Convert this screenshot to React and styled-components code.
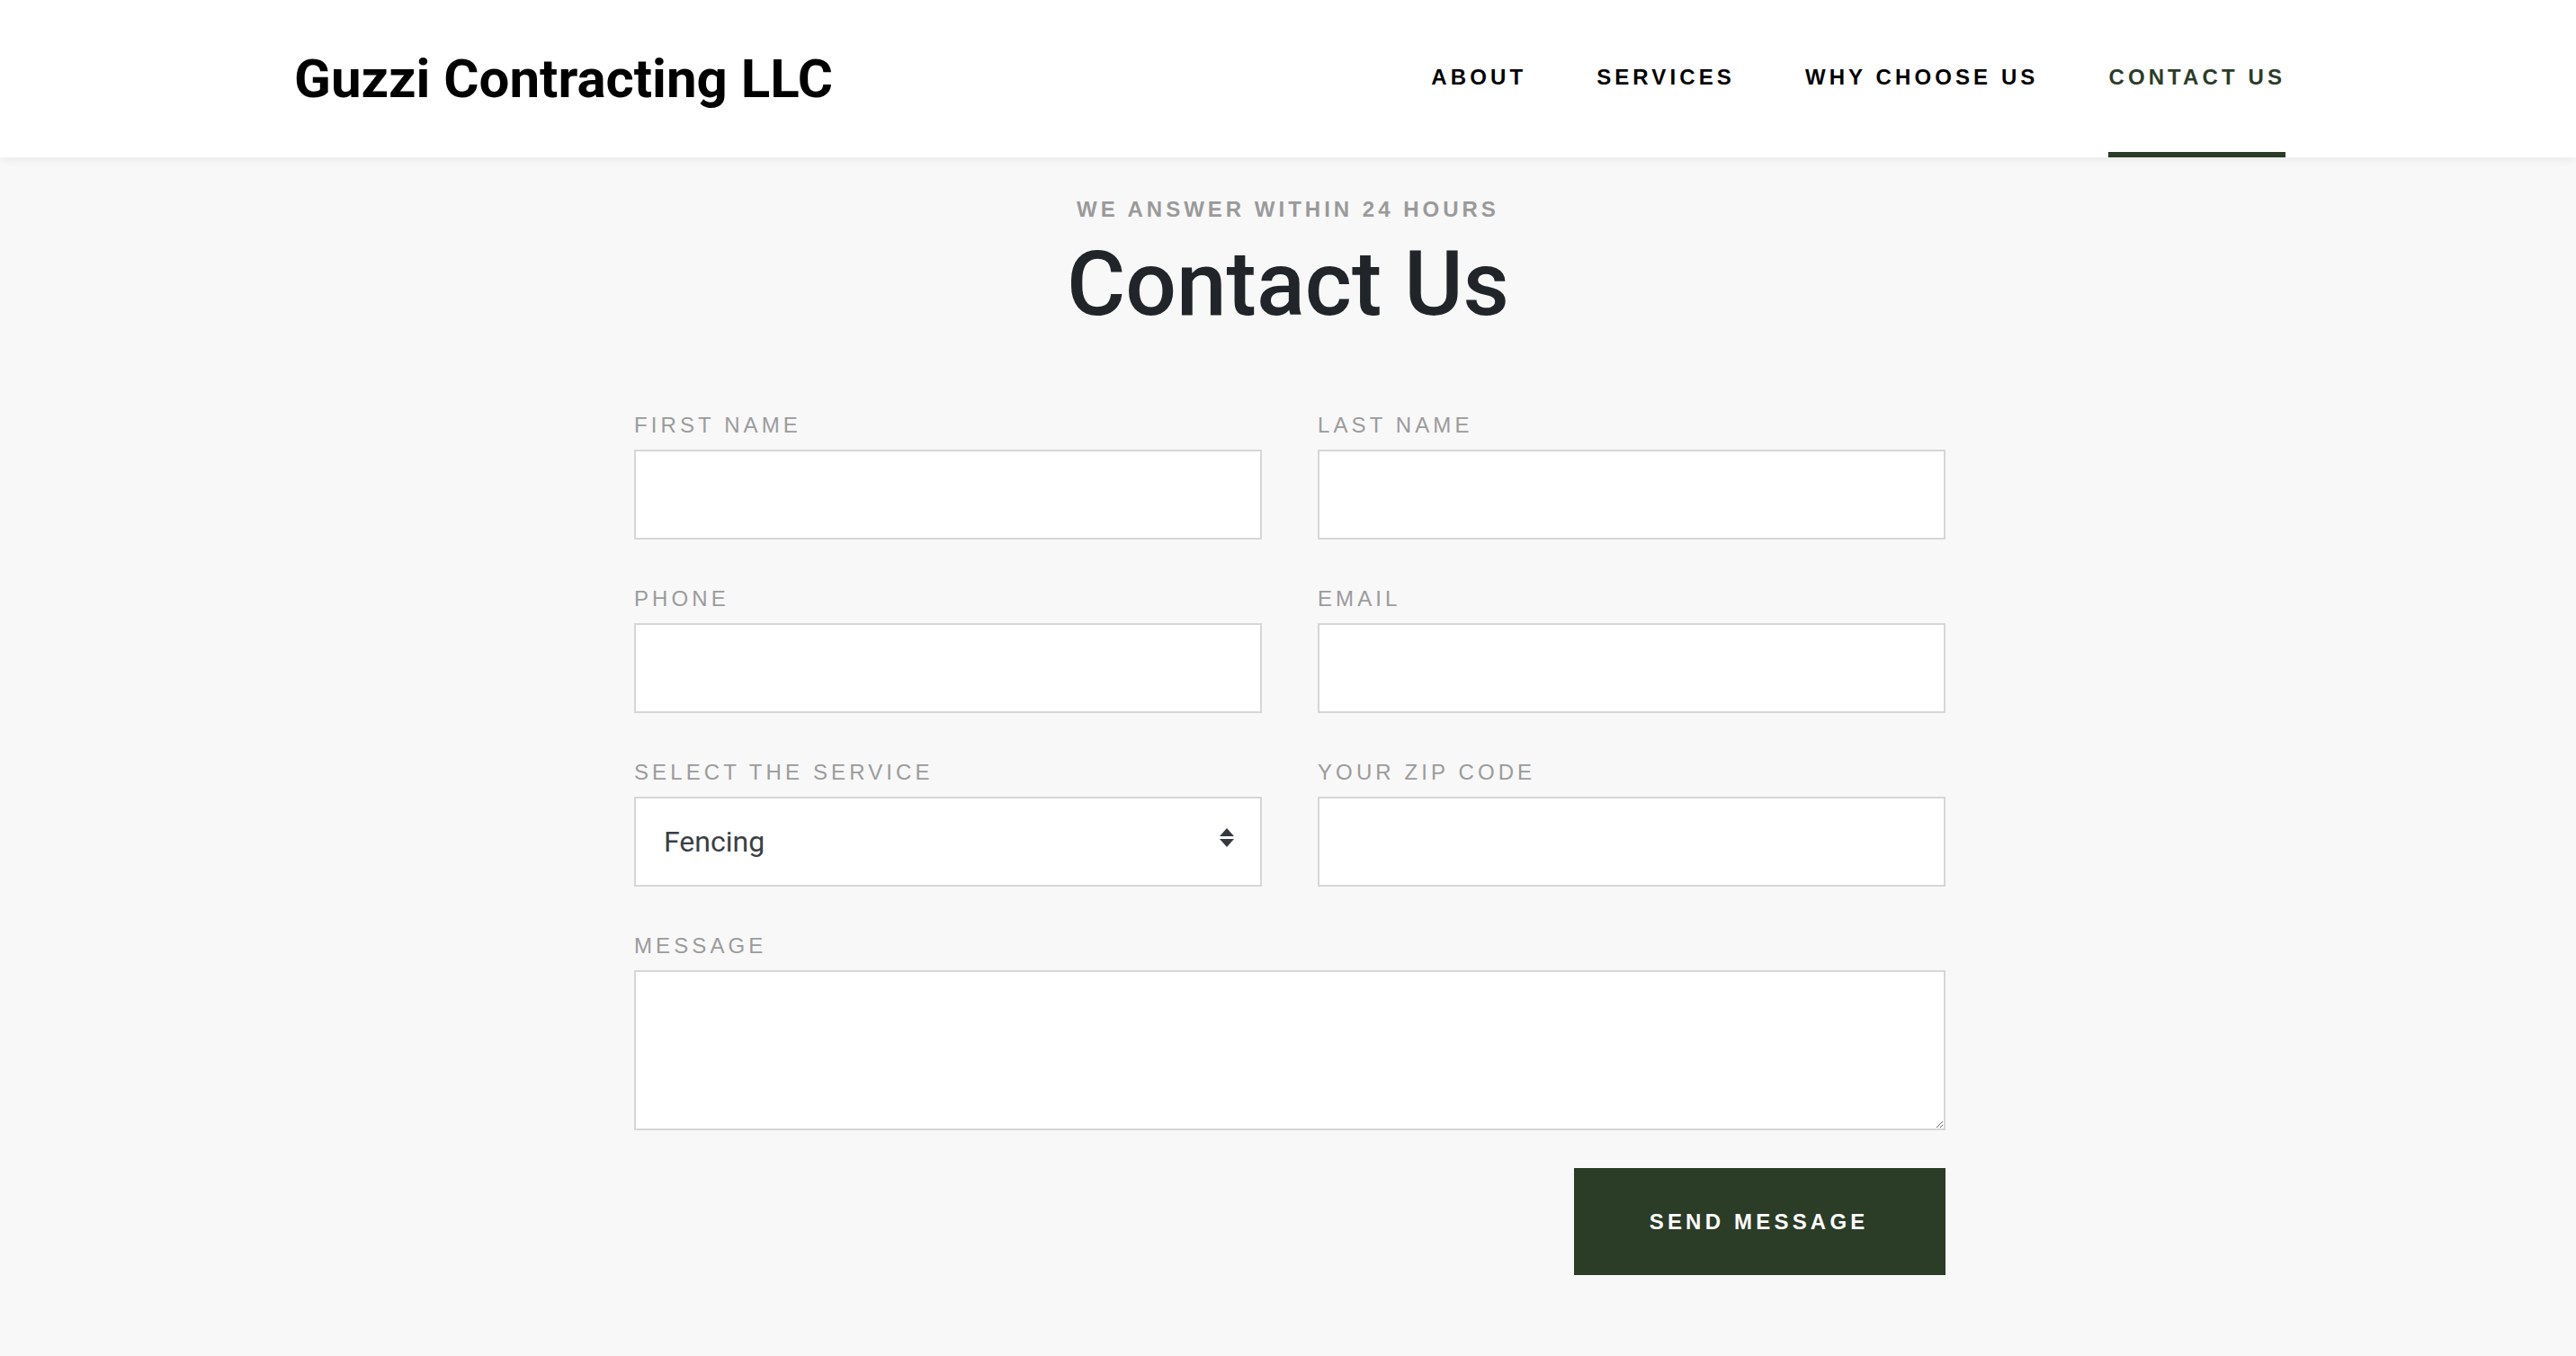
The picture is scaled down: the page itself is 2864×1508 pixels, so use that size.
import React from "react";
import styled, { createGlobalStyle } from "styled-components";

const GlobalStyle = createGlobalStyle`
  body {
    margin: 0;
    background: #f8f8f8;
    font-family: "Liberation Sans", Arial, Helvetica, sans-serif;
  }
  * {
    box-sizing: border-box;
  }
`;

const green = "#2b3c27";

const Page = styled.div`
  min-height: 100vh;
  background: #f8f8f8;
`;

const Header = styled.header`
  background: #fff;
  box-shadow: 0 2px 10px rgba(0, 0, 0, 0.07);
  position: relative;
  z-index: 1;
`;

const HeaderInner = styled.div`
  width: 2218px;
  height: 175px;
  margin: 0 auto;
  padding-left: 4px;
  display: flex;
  justify-content: space-between;
  align-items: stretch;
`;

const Logo = styled.div`
  display: flex;
  align-items: center;
  font-family: Roboto, "Liberation Sans", sans-serif;
  font-weight: 700;
  font-size: 60px;
  color: #000;
`;

const Nav = styled.nav`
  display: flex;
  gap: 78px;
`;

const NavItem = styled.a`
  display: flex;
  align-items: center;
  border-top: 3px solid transparent;
  border-bottom: 6px solid ${(p) => (p.$active ? green : "transparent")};
  font-family: "Liberation Sans", Arial, sans-serif;
  font-weight: 700;
  font-size: 24px;
  letter-spacing: 4.1px;
  color: ${(p) => (p.$active ? green : "#000")};
  text-decoration: none;
  cursor: pointer;
`;

const Main = styled.main`
  padding: 43px 0 90px;
`;

const Eyebrow = styled.div`
  text-align: center;
  font-family: "Liberation Sans", Arial, sans-serif;
  font-weight: 700;
  font-size: 24px;
  line-height: 29px;
  letter-spacing: 4px;
  color: #9a9a9a;
`;

const Title = styled.h1`
  margin: 9px 0 0;
  text-align: center;
  font-family: Roboto, "Liberation Sans", sans-serif;
  font-weight: 500;
  font-size: 100px;
  line-height: 120px;
  color: #212529;
`;

const Form = styled.form`
  width: 1458px;
  margin: 82px 0 0 calc(50% - 727px);
  display: grid;
  grid-template-columns: 1fr 1fr;
  column-gap: 62px;
  row-gap: 51px;
`;

const Field = styled.div`
  display: flex;
  flex-direction: column;
  grid-column: ${(p) => (p.$wide ? "1 / span 2" : "auto")};
`;

const Label = styled.label`
  display: block;
  margin-bottom: 13px;
  font-family: "Liberation Sans", Arial, sans-serif;
  font-size: 24px;
  line-height: 29px;
  letter-spacing: 4.1px;
  color: #9b9b9b;
`;

const inputBase = `
  width: 100%;
  background: #fff;
  border: 2px solid #d6d6d6;
  border-radius: 0;
  outline: none;
  font-family: Roboto, "Liberation Sans", sans-serif;
  font-size: 32px;
  color: #3a3f44;
`;

const Input = styled.input`
  ${inputBase}
  height: 100px;
  padding: 0 31px;
`;

const SelectWrap = styled.div`
  position: relative;
`;

const Select = styled.select`
  ${inputBase}
  height: 100px;
  padding: 0 31px;
  appearance: none;
  -webkit-appearance: none;
`;

const Arrows = styled.svg`
  position: absolute;
  right: 31px;
  top: 35px;
  pointer-events: none;
`;

const TextArea = styled.textarea`
  ${inputBase}
  height: 178px;
  padding: 20px 31px;
  resize: vertical;
  display: block;
`;

const Actions = styled.div`
  grid-column: 1 / span 2;
  display: flex;
  justify-content: flex-end;
  margin-top: -9px;
`;

const SendButton = styled.button`
  width: 413px;
  height: 119px;
  border: none;
  background: ${green};
  color: #fff;
  font-family: "Liberation Sans", Arial, sans-serif;
  font-weight: 700;
  font-size: 24px;
  letter-spacing: 4.2px;
  padding-left: 4.2px;
  cursor: pointer;
`;

const navLinks = ["ABOUT", "SERVICES", "WHY CHOOSE US", "CONTACT US"];

const App = () => {
  return (
    <Page>
      <GlobalStyle />
      <Header>
        <HeaderInner>
          <Logo>Guzzi Contracting LLC</Logo>
          <Nav>
            {navLinks.map((l) => (
              <NavItem key={l} $active={l === "CONTACT US"}>
                {l}
              </NavItem>
            ))}
          </Nav>
        </HeaderInner>
      </Header>
      <Main>
        <Eyebrow>WE ANSWER WITHIN 24 HOURS</Eyebrow>
        <Title>Contact Us</Title>
        <Form onSubmit={(e) => e.preventDefault()}>
          <Field>
            <Label>FIRST NAME</Label>
            <Input type="text" />
          </Field>
          <Field>
            <Label>LAST NAME</Label>
            <Input type="text" />
          </Field>
          <Field>
            <Label>PHONE</Label>
            <Input type="tel" />
          </Field>
          <Field>
            <Label>EMAIL</Label>
            <Input type="email" />
          </Field>
          <Field>
            <Label>SELECT THE SERVICE</Label>
            <SelectWrap>
              <Select defaultValue="Fencing">
                <option>Fencing</option>
                <option>Decks</option>
                <option>Roofing</option>
                <option>Siding</option>
              </Select>
              <Arrows width="16" height="21" viewBox="0 0 16 21">
                <path d="M8 0 L16 9 L0 9 Z" fill="#343a40" />
                <path d="M0 12 L16 12 L8 21 Z" fill="#343a40" />
              </Arrows>
            </SelectWrap>
          </Field>
          <Field>
            <Label>YOUR ZIP CODE</Label>
            <Input type="text" />
          </Field>
          <Field $wide>
            <Label>MESSAGE</Label>
            <TextArea />
          </Field>
          <Actions>
            <SendButton type="submit">SEND MESSAGE</SendButton>
          </Actions>
        </Form>
      </Main>
    </Page>
  );
};

export default App;
